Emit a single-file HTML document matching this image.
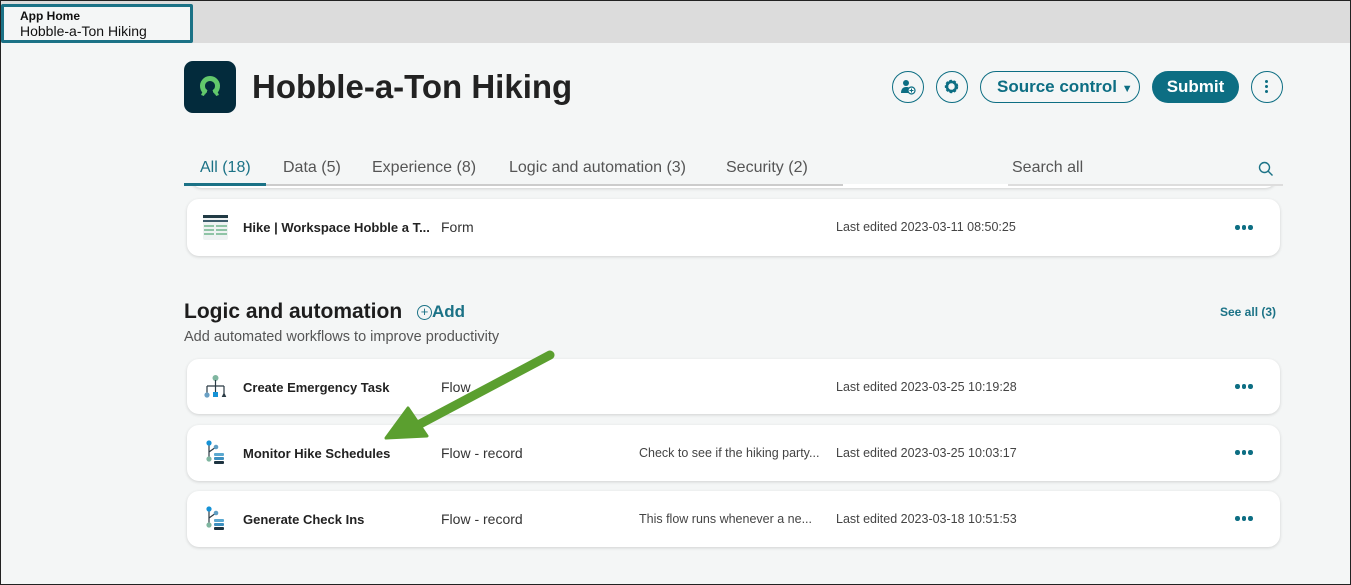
<!DOCTYPE html>
<html><head><style>
*{box-sizing:border-box;margin:0;padding:0}
body{width:1351px;height:585px;overflow:hidden;background:#f4f6f6;font-family:"Liberation Sans","DejaVu Sans",sans-serif;position:relative;color:#1d1d1d}
.frame{position:absolute;left:0;top:0;width:1351px;height:585px;border:1px solid #222;z-index:20;pointer-events:none}
.top{position:absolute;left:0;top:0;width:1351px;height:43px;background:#dcdcdc}
.tab{position:absolute;left:1px;top:4px;width:192px;height:39px;background:#f4f6f6;border:3px solid #1b7286;border-radius:2px;padding:2px 0 0 16px}
.abs{position:absolute;white-space:nowrap}
.card{position:absolute;left:187px;width:1093px;background:#fff;border-radius:12px;box-shadow:0 1px 3px rgba(0,0,0,.15)}
.nm{position:absolute;left:56px;font-size:13px;font-weight:bold;color:#222}
.ty{position:absolute;left:254px;font-size:14px;color:#333}
.ds{position:absolute;left:452px;font-size:12.5px;color:#444}
.le{position:absolute;left:649px;font-size:12.5px;color:#444}
.dots{position:absolute;left:1048px;width:18px;height:5px}
.dots i{position:absolute;top:0;width:4.5px;height:4.5px;border-radius:50%;background:#0d6e83}
.cb{position:absolute;border:1.5px solid #0d6e83;border-radius:20px;color:#0d6e83}
</style></head><body>
<div class="top"></div>
<div class="tab"><div style="font-size:12px;font-weight:bold;color:#111">App Home</div><div style="font-size:14px;color:#111;margin-top:0px">Hobble-a-Ton Hiking</div></div>

<div class="abs" style="left:184px;top:61px;width:52px;height:52px;background:#032b3c;border-radius:9px"></div>
<svg class="abs" style="left:194px;top:71px" width="32" height="32" viewBox="0 0 32 32"><path d="M12.25 21.5A7.5 7.5 0 1 1 19.75 21.5" fill="none" stroke="#62c86b" stroke-width="5"/><path d="M8.5 24.5c1-3 3-4.5 4.5-4.5M23.5 24.5c-1-3-3-4.5-4.5-4.5" stroke="#62c86b" stroke-width="3" fill="none"/></svg>
<div class="abs" style="left:252px;top:68px;font-size:33px;font-weight:bold;color:#222">Hobble-a-Ton Hiking</div>

<div class="cb" style="left:892px;top:71px;width:32px;height:32px"><svg width="30" height="30" viewBox="0 0 30 30"><circle cx="13" cy="11" r="3" fill="#0d6e83"/><path d="M8 21c0-4 2-6 5-6s4 1 4 2v4z" fill="#0d6e83"/><circle cx="18.5" cy="18.5" r="3.5" fill="#fff" stroke="#0d6e83" stroke-width="1.2"/><path d="M18.5 16.5v4M16.5 18.5h4" stroke="#0d6e83" stroke-width="1.1"/></svg></div>
<div class="cb" style="left:936px;top:71px;width:32px;height:32px"><svg width="30" height="30" viewBox="0 0 30 30"><circle cx="14.5" cy="14.5" r="5" fill="none" stroke="#0d6e83" stroke-width="3.4" stroke-dasharray="2.2 1.4"/><circle cx="14.5" cy="14.5" r="4.6" fill="none" stroke="#0d6e83" stroke-width="2.5"/></svg></div>
<div class="cb" style="left:980px;top:71px;width:160px;height:32px;font-size:17px;font-weight:bold;padding:5px 0 0 16px">Source control <span style="font-size:11px">▼</span></div>
<div class="abs" style="left:1152px;top:71px;width:87px;height:32px;background:#0d6e83;border-radius:20px;color:#fff;font-size:17px;font-weight:bold;text-align:center;line-height:31px">Submit</div>
<div class="cb" style="left:1251px;top:71px;width:32px;height:32px"><svg width="29" height="29" viewBox="0 0 29 29"><g fill="#0d6e83"><circle cx="14.5" cy="9.5" r="1.5"/><circle cx="14.5" cy="14.5" r="1.5"/><circle cx="14.5" cy="19.5" r="1.5"/></g></svg></div>

<div class="abs" style="left:190px;top:176px;width:1087px;height:12px;background:#fff;border-radius:0 0 12px 12px;box-shadow:0 1px 3px rgba(0,0,0,.15)"></div>
<div class="abs" style="left:184px;top:150px;width:1100px;height:34px;background:#f4f6f6"></div>
<div class="abs" style="left:184px;top:184px;width:659px;height:2px;background:#ccc"></div>
<div class="abs" style="left:184px;top:183px;width:82px;height:3px;background:#1b7286"></div>
<div class="abs" style="left:200px;top:159px;font-size:16px;color:#1b7286">All (18)</div>
<div class="abs" style="left:283px;top:159px;font-size:16px;color:#555">Data (5)</div>
<div class="abs" style="left:372px;top:159px;font-size:16px;color:#555">Experience (8)</div>
<div class="abs" style="left:509px;top:159px;font-size:16px;color:#555">Logic and automation (3)</div>
<div class="abs" style="left:726px;top:159px;font-size:16px;color:#555">Security (2)</div>
<div class="abs" style="left:1008px;top:184px;width:275px;height:2px;background:#ddd"></div>
<div class="abs" style="left:1012px;top:159px;font-size:16px;color:#555">Search all</div>
<svg class="abs" style="left:1258px;top:161px" width="16" height="16" viewBox="0 0 16 16"><circle cx="6.5" cy="6.5" r="5" fill="none" stroke="#1b7286" stroke-width="1.4"/><path d="M10 10l4.5 4.5" stroke="#1b7286" stroke-width="1.4"/></svg>

<div class="card" style="top:199px;height:57px">
<svg class="abs" style="left:16px;top:16px" width="25" height="25" viewBox="0 0 25 25"><rect x="0" y="0" width="25" height="25" rx="2" fill="#eef2f2"/><rect x="0" y="0" width="25" height="3" fill="#203a44"/><rect x="0" y="5" width="25" height="2" fill="#3d5c6c"/><g fill="#8fc4a6"><rect x="1" y="10" width="10" height="2"/><rect x="13" y="10" width="11" height="2"/><rect x="1" y="14" width="10" height="2"/><rect x="13" y="14" width="11" height="2"/><rect x="1" y="18" width="10" height="2"/><rect x="13" y="18" width="11" height="2"/></g></svg>
<div class="nm" style="top:21px">Hike | Workspace Hobble a T...</div><div class="ty" style="top:20px">Form</div>
<div class="le" style="top:21px">Last edited 2023-03-11 08:50:25</div><div class="dots" style="top:26px"><i style="left:0"></i><i style="left:6.5px"></i><i style="left:13px"></i></div></div>

<div class="abs" style="left:184px;top:300px;font-size:21px;font-weight:bold;color:#1d1d1d">Logic and automation</div>
<div class="abs" style="left:417px;top:302px;font-size:17px;font-weight:bold;color:#1b7286"><span style="display:inline-block;width:15px;height:15px;border:1.3px solid #1b7286;border-radius:50%;font-size:13px;line-height:12px;text-align:center;font-weight:normal;vertical-align:1px">+</span>Add</div>
<div class="abs" style="left:184px;top:329px;font-size:14.5px;color:#555">Add automated workflows to improve productivity</div>
<div class="abs" style="left:1220px;top:305px;font-size:12px;font-weight:bold;color:#1b7286">See all (3)</div>

<div class="card" style="top:359px;height:55px">
<svg class="abs" style="left:16px;top:16px" width="25" height="25" viewBox="0 0 25 25"><circle cx="12.5" cy="3" r="3" fill="#7fb6a0"/><path d="M12.5 5v6M4 11h17M4 11v7M12.5 11v7M21 11v7" stroke="#2a3a44" stroke-width="1.2" fill="none"/><circle cx="4" cy="20" r="2.6" fill="#6aa0c4"/><rect x="10" y="17" width="5" height="5" fill="#1592d6"/><path d="M21 17l2.3 5h-4.6z" fill="#2a3a44"/></svg>
<div class="nm" style="top:21px">Create Emergency Task</div><div class="ty" style="top:20px">Flow</div>
<div class="le" style="top:21px">Last edited 2023-03-25 10:19:28</div><div class="dots" style="top:25px"><i style="left:0"></i><i style="left:6.5px"></i><i style="left:13px"></i></div></div>

<div class="card" style="top:425px;height:56px">
<svg class="abs" style="left:19px;top:15px" width="22" height="26" viewBox="0 0 22 26"><path d="M3 3v16M3 12l7-5" stroke="#2a3a44" stroke-width="1.2" fill="none"/><circle cx="3" cy="3" r="2.6" fill="#1592d6"/><circle cx="10" cy="7" r="2.3" fill="#5f9ec4"/><circle cx="3" cy="19" r="2.6" fill="#7fb6a0"/><rect x="8" y="13" width="10" height="3" rx="1" fill="#5aa8d0"/><rect x="8" y="17" width="10" height="3" rx="1" fill="#3c8fbf"/><rect x="8" y="21" width="10" height="3" rx="1" fill="#1e3340"/></svg>
<div class="nm" style="top:21px">Monitor Hike Schedules</div><div class="ty" style="top:20px">Flow - record</div>
<div class="ds" style="top:21px">Check to see if the hiking party...</div>
<div class="le" style="top:21px">Last edited 2023-03-25 10:03:17</div><div class="dots" style="top:25px"><i style="left:0"></i><i style="left:6.5px"></i><i style="left:13px"></i></div></div>

<div class="card" style="top:491px;height:56px">
<svg class="abs" style="left:19px;top:15px" width="22" height="26" viewBox="0 0 22 26"><path d="M3 3v16M3 12l7-5" stroke="#2a3a44" stroke-width="1.2" fill="none"/><circle cx="3" cy="3" r="2.6" fill="#1592d6"/><circle cx="10" cy="7" r="2.3" fill="#5f9ec4"/><circle cx="3" cy="19" r="2.6" fill="#7fb6a0"/><rect x="8" y="13" width="10" height="3" rx="1" fill="#5aa8d0"/><rect x="8" y="17" width="10" height="3" rx="1" fill="#3c8fbf"/><rect x="8" y="21" width="10" height="3" rx="1" fill="#1e3340"/></svg>
<div class="nm" style="top:21px">Generate Check Ins</div><div class="ty" style="top:20px">Flow - record</div>
<div class="ds" style="top:21px">This flow runs whenever a ne...</div>
<div class="le" style="top:21px">Last edited 2023-03-18 10:51:53</div><div class="dots" style="top:25px"><i style="left:0"></i><i style="left:6.5px"></i><i style="left:13px"></i></div></div>

<svg class="abs" style="left:0;top:0;z-index:10" width="1351" height="585" viewBox="0 0 1351 585">
<path d="M550 355L420 424" stroke="#5b9f2f" stroke-width="9" stroke-linecap="round"/>
<path d="M386 438L408 408L427 436Z" fill="#5b9f2f" stroke="#5b9f2f" stroke-width="3" stroke-linejoin="round"/>
</svg>
<div class="frame"></div>
</body></html>
